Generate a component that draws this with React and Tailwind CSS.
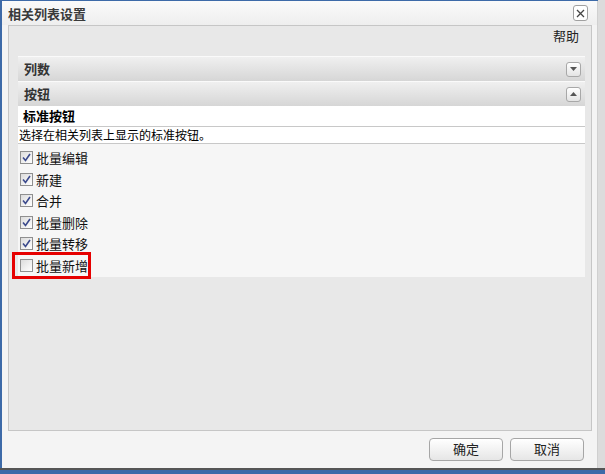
import React, { useState } from 'react';

const items = [
  { label: '批量编辑', checked: true },
  { label: '新建', checked: true },
  { label: '合并', checked: true },
  { label: '批量删除', checked: true },
  { label: '批量转移', checked: true },
  { label: '批量新增', checked: false, highlight: true },
];

function Check({ checked }) {
  return (
    <span className="w-[13px] h-[13px] border border-[#8f8f8f] bg-gradient-to-br from-[#dcdcdc] to-[#ffffff] flex items-center justify-center shrink-0">
      {checked && (
        <svg width="9" height="9" viewBox="0 0 9 9">
          <path d="M1 4.5 L3.5 7.5 L8 1" fill="none" stroke="#3b4a8c" strokeWidth="1.6" />
        </svg>
      )}
    </span>
  );
}

function Toggle({ up }) {
  return (
    <span className="w-[15px] h-[15px] border border-[#a8a8a8] rounded-[3px] bg-gradient-to-b from-white to-[#e4e4e4] flex items-center justify-center">
      <svg width="7" height="4" viewBox="0 0 7 4">
        {up ? <path d="M0 4 L3.5 0 L7 4 Z" fill="#555" /> : <path d="M0 0 L3.5 4 L7 0 Z" fill="#555" />}
      </svg>
    </span>
  );
}

export default function App() {
  const [list, setList] = useState(items);

  const toggle = (i) => {
    setList(list.map((it, j) => (j === i ? { ...it, checked: !it.checked } : it)));
  };

  return (
    <div
      className="w-[605px] h-[474px] bg-[#3d6aa8] flex flex-col text-[12px] text-black"
      style={{ fontFamily: '"Noto Sans CJK SC", "Noto Sans", sans-serif' }}
    >
      <div className="flex h-[468px]">
        {/* dialog */}
        <div className="w-[596px] ml-[2px] mt-[1px] bg-[#f4f4f4] border-r border-[#d0d0d0] flex flex-col">
          {/* title bar */}
          <div className="h-[24px] flex items-center justify-between pl-[6px] pr-[9px] bg-gradient-to-b from-[#fafafa] to-[#eeeeee]">
            <span className="text-[13px] font-bold text-[#3a3a3a] leading-none">相关列表设置</span>
            <span className="w-[15px] h-[16px] border border-[#a0a0a0] rounded-[3px] bg-white flex items-center justify-center">
              <svg width="9" height="9" viewBox="0 0 9 9">
                <path d="M1 1 L8 8 M8 1 L1 8" stroke="#444" strokeWidth="1.3" />
              </svg>
            </span>
          </div>

          {/* content panel */}
          <div className="ml-[6px] w-[584px] h-[406px] bg-[#e8e8e8] border border-[#c6c6c6] flex flex-col">
            <div className="h-[30px] flex justify-end items-start pt-[0px] pr-[12px]">
              <span className="text-[13px] text-[#222]">帮助</span>
            </div>

            <div className="ml-[9px] w-[567px] flex flex-col">
              <div className="h-[25px] border-t border-[#fafafa] bg-gradient-to-b from-[#f0f0f0] to-[#d6d6d6] flex items-center justify-between pl-[6px] pr-[4px]">
                <span className="font-bold text-[13px] text-[#333]">列数</span>
                <Toggle />
              </div>
              <div className="h-[25px] border-t border-[#fafafa] bg-gradient-to-b from-[#f0f0f0] to-[#d6d6d6] flex items-center justify-between pl-[6px] pr-[4px]">
                <span className="font-bold text-[13px] text-[#333]">按钮</span>
                <Toggle up />
              </div>
              <div className="h-[21px] bg-white border-b border-[#c8c8c8] flex items-center pl-[5px]">
                <span className="font-bold text-[13px] text-black">标准按钮</span>
              </div>
              <div className="h-[17px] bg-white border-b border-[#c8c8c8] flex items-center pl-[1px]">
                <span className="text-[12px] text-black">选择在相关列表上显示的标准按钮。</span>
              </div>
              <div className="bg-[#f6f6f6] flex flex-col pt-[3px] pb-[1px]">
                {list.map((it, i) => (
                  <label
                    key={it.label}
                    onClick={() => toggle(i)}
                    className="relative h-[21.5px] flex items-center gap-[3px] pl-[2px] cursor-pointer"
                  >
                    <Check checked={it.checked} />
                    <span className="text-[13px] text-[#111]">{it.label}</span>
                    {it.highlight && (
                      <span className="absolute left-[-6px] top-[-3px] w-[79px] h-[27px] border-[3px] border-[#e60000] pointer-events-none" />
                    )}
                  </label>
                ))}
              </div>
            </div>
          </div>

          {/* footer */}
          <div className="flex-1 flex justify-end items-center gap-[7px] pr-[13px] pb-[1px]">
            <button className="w-[74px] h-[23px] border border-[#a6a6a6] rounded-[4px] bg-gradient-to-b from-white to-[#e6e6e6] text-[13px] text-[#222]">
              确定
            </button>
            <button className="w-[74px] h-[23px] border border-[#a6a6a6] rounded-[4px] bg-gradient-to-b from-white to-[#e6e6e6] text-[13px] text-[#222]">
              取消
            </button>
          </div>
        </div>
        <div className="flex-1 bg-[#dcdcdc]" />
      </div>
      <div className="h-[2px] bg-[#555]" />
    </div>
  );
}
